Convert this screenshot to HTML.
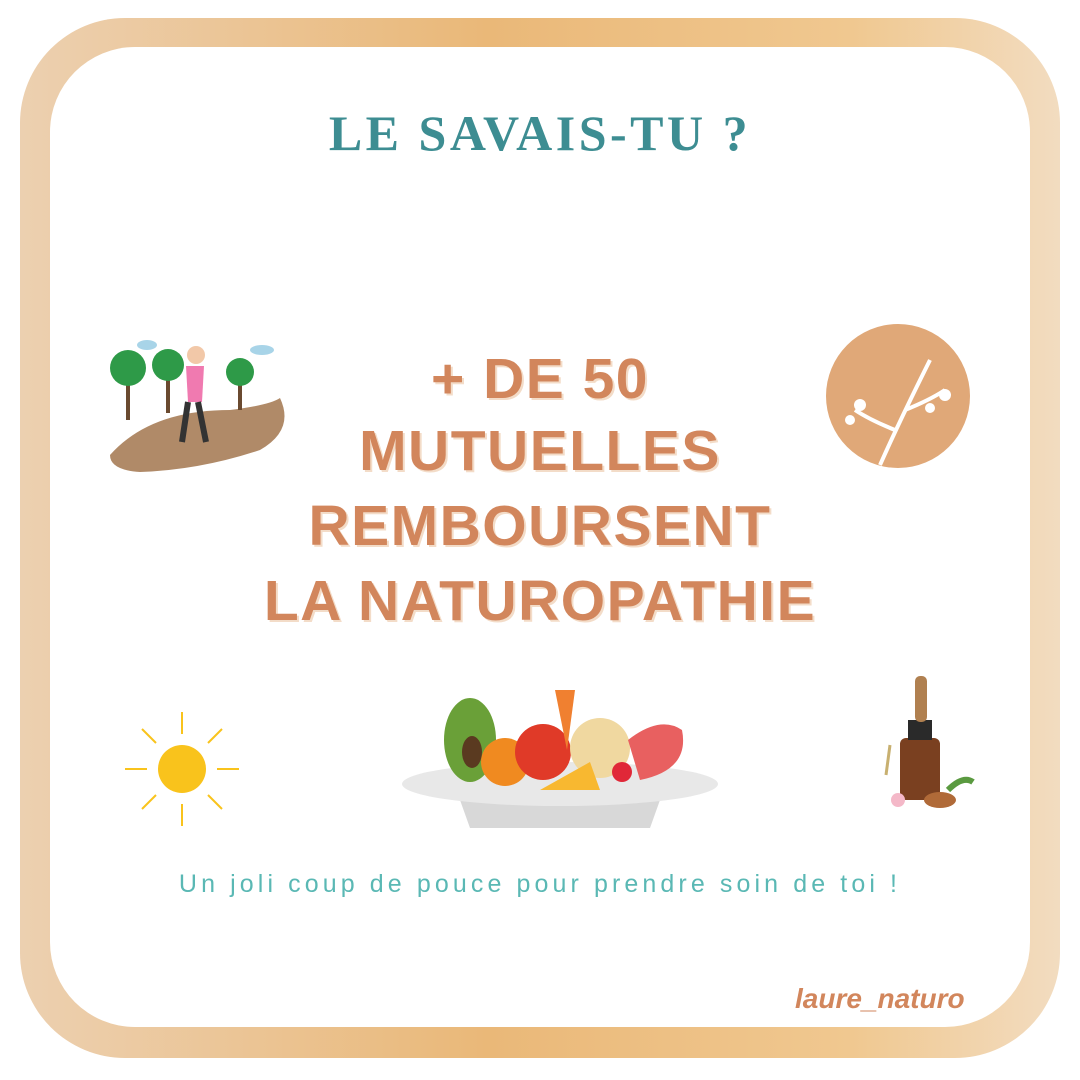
<!DOCTYPE html>
<html><head><style>
html,body{margin:0;padding:0;background:#fff;}
body{width:1080px;height:1080px;position:relative;overflow:hidden;font-family:"Liberation Sans",sans-serif;}
.frame{position:absolute;left:20px;top:18px;width:1040px;height:1040px;border-radius:105px;background:linear-gradient(90deg,#ecd0b0,#eab878 45%,#f0c890 80%,#f2dcc0);}
.inner{position:absolute;left:50px;top:47px;width:980px;height:980px;border-radius:85px;background:#fff;}
.t{position:absolute;left:0;width:1080px;text-align:center;}
.title{top:104px;font-family:"Liberation Serif",serif;font-weight:bold;font-size:50px;color:#3d8d92;letter-spacing:3.5px;}
.main{font-weight:bold;color:#d2865c;font-size:57px;letter-spacing:1.5px;text-shadow:2px 2px 0 #f3dcc8;}
.sub{top:870px;font-size:25px;color:#5ab8b4;letter-spacing:4.1px;}
.sig{position:absolute;left:795px;top:983px;font-size:28px;font-weight:bold;font-style:italic;color:#d2865c;}
</style></head><body>
<div class="frame"></div><div class="inner"></div>
<div class="t title">LE SAVAIS-TU ?</div>
<div class="t main" style="top:346px">+ DE 50</div>
<div class="t main" style="top:418px">MUTUELLES</div>
<div class="t main" style="top:493px">REMBOURSENT</div>
<div class="t main" style="top:568px">LA NATUROPATHIE</div>
<div class="t sub">Un joli coup de pouce pour prendre soin de toi !</div>
<div class="sig">laure_naturo</div>
<svg style="position:absolute;left:0;top:0" width="1080" height="1080">
<path d="M110 455 Q150 410 230 410 Q270 405 280 398 Q295 430 260 450 Q200 470 140 472 Q110 470 110 455Z" fill="#b08a68"/>
<rect x="126" y="380" width="4" height="40" fill="#6a4a30"/><circle cx="128" cy="368" r="18" fill="#2e9a48"/>
<rect x="166" y="375" width="4" height="38" fill="#6a4a30"/><circle cx="168" cy="365" r="16" fill="#2e9a48"/>
<rect x="238" y="380" width="4" height="30" fill="#6a4a30"/><circle cx="240" cy="372" r="14" fill="#2e9a48"/>
<ellipse cx="147" cy="345" rx="10" ry="5" fill="#a8d4e8"/><ellipse cx="262" cy="350" rx="12" ry="5" fill="#a8d4e8"/>
<circle cx="196" cy="355" r="9" fill="#f2c8a8"/><path d="M186 366 h18 l-2 36 h-14z" fill="#f07ab0"/>
<path d="M188 402 l-6 40 M198 402 l8 40" stroke="#333" stroke-width="6"/>
<circle cx="898" cy="396" r="72" fill="#e0a878"/>
<path d="M880 465 Q900 420 930 360 M905 410 Q930 400 945 390 M895 430 Q870 420 855 410" stroke="#fff" stroke-width="4" fill="none"/>
<circle cx="860" cy="405" r="6" fill="#fff"/><circle cx="850" cy="420" r="5" fill="#fff"/><circle cx="945" cy="395" r="6" fill="#fff"/><circle cx="930" cy="408" r="5" fill="#fff"/>
<circle cx="182" cy="769" r="24" fill="#f9c31c"/>
<g stroke="#f9c31c" stroke-width="2">
<path d="M182 712v22M182 804v22M125 769h22M217 769h22M142 729l14 14M208 795l14 14M222 729l-14 14M156 795l-14 14"/></g>
<path d="M460 800 h200 l-10 28 h-180z" fill="#d8d8d8"/>
<ellipse cx="560" cy="784" rx="158" ry="22" fill="#e8e8e8"/>
<ellipse cx="470" cy="740" rx="26" ry="42" fill="#6aa038"/><ellipse cx="472" cy="752" rx="10" ry="16" fill="#5a3a20"/>
<circle cx="505" cy="762" r="24" fill="#f08a20"/>
<circle cx="543" cy="752" r="28" fill="#e03a28"/>
<path d="M555 690 l20 0 -8 60z" fill="#f08030"/>
<circle cx="600" cy="748" r="30" fill="#f0d8a0"/>
<path d="M628 740 Q660 715 682 730 Q690 770 640 780z" fill="#e86060"/>
<path d="M540 790 l50 -28 l10 28z" fill="#f8b830"/>
<circle cx="622" cy="772" r="10" fill="#e02838"/>
<rect x="900" y="738" width="40" height="62" rx="6" fill="#7a4020"/>
<rect x="908" y="720" width="24" height="20" fill="#2a2a2a"/>
<rect x="915" y="676" width="12" height="46" rx="5" fill="#b08050"/>
<path d="M890 745 l-4 30" stroke="#c8b070" stroke-width="3"/>
<ellipse cx="940" cy="800" rx="16" ry="8" fill="#b06a38"/><circle cx="898" cy="800" r="7" fill="#f4b8c8"/>
<path d="M948 790 q15 -15 25 -8" stroke="#5a9a40" stroke-width="6" fill="none"/>
</svg>
</body></html>
